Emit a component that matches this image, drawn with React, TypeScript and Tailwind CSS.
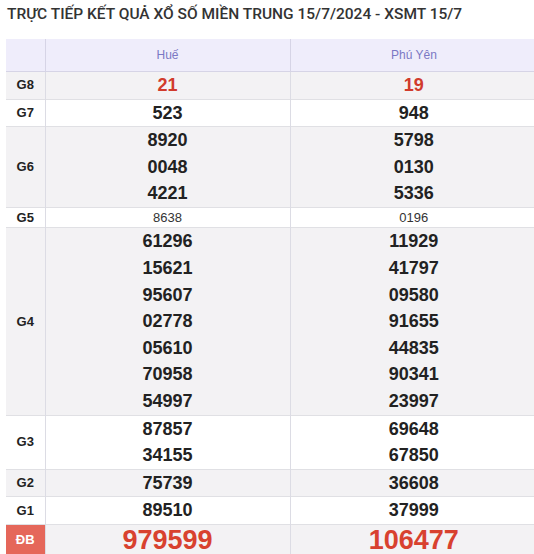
const rows: { label: string; hue: string[]; py: string[]; kind?: 'g8' | 'g5' | 'db'; gray: boolean }[] = [
  { label: 'G8', hue: ['21'], py: ['19'], kind: 'g8', gray: true },
  { label: 'G7', hue: ['523'], py: ['948'], gray: false },
  { label: 'G6', hue: ['8920', '0048', '4221'], py: ['5798', '0130', '5336'], gray: true },
  { label: 'G5', hue: ['8638'], py: ['0196'], kind: 'g5', gray: false },
  {
    label: 'G4',
    hue: ['61296', '15621', '95607', '02778', '05610', '70958', '54997'],
    py: ['11929', '41797', '09580', '91655', '44835', '90341', '23997'],
    gray: true,
  },
  { label: 'G3', hue: ['87857', '34155'], py: ['69648', '67850'], gray: false },
  { label: 'G2', hue: ['75739'], py: ['36608'], gray: true },
  { label: 'G1', hue: ['89510'], py: ['37999'], gray: false },
  { label: 'ĐB', hue: ['979599'], py: ['106477'], kind: 'db', gray: true },
];

const numClass = (kind?: string) => {
  if (kind === 'g8') return 'text-[18px] font-bold text-[#d13b2c] leading-[27px]';
  if (kind === 'g5') return 'text-[13px] font-normal text-[#333] leading-[17px]';
  if (kind === 'db') return 'text-[27px] font-bold text-[#d8412f] leading-[30px]';
  return 'text-[18px] font-bold text-[#222] leading-[26.6px]';
};

const Cell = ({ nums, kind }: { nums: string[]; kind?: string }) => (
  <td className="border-r border-[#dcdce4] text-center align-middle p-0">
    {nums.map((n) => (
      <div key={n} className={numClass(kind)}>
        {n}
      </div>
    ))}
  </td>
);

export default function App() {
  return (
    <div className="w-[534px] h-[554px] overflow-hidden bg-white" style={{ fontFamily: '"Liberation Sans", Arial, sans-serif' }}>
      <h1
        className="pl-[7px] pt-[4px] h-[39px] text-[15.5px] leading-[20px] font-medium text-[#333]"
        style={{ fontFamily: 'Roboto, "Liberation Sans", sans-serif' }}
      >
        TRỰC TIẾP KẾT QUẢ XỔ SỐ MIỀN TRUNG 15/7/2024 - XSMT 15/7
      </h1>
      <table className="ml-[6px] w-[532px] border-collapse table-fixed">
        <colgroup>
          <col className="w-[39px]" />
          <col className="w-[245px]" />
          <col />
        </colgroup>
        <thead>
          <tr className="bg-[#efedfb] h-[32px] border-b border-[#d6d4e6]">
            <th className="border-r border-[#d6d4e6]"></th>
            <th className="border-r border-[#d6d4e6] text-[12px] font-normal text-[#7b78c4]">Huế</th>
            <th className="text-[12px] font-normal text-[#7b78c4]">Phú Yên</th>
          </tr>
        </thead>
        <tbody>
          {rows.map((r) => (
            <tr key={r.label} className={`${r.gray ? 'bg-[#f3f2f4]' : 'bg-white'} border-b border-[#e0e0e4]`}>
              <td
                className={`border-r border-[#dcdce4] text-center align-middle text-[13px] font-bold p-0 ${
                  r.kind === 'db' ? 'bg-[#e5675a] text-white' : 'text-[#222]'
                }`}
              >
                {r.label}
              </td>
              <Cell nums={r.hue} kind={r.kind} />
              <Cell nums={r.py} kind={r.kind} />
            </tr>
          ))}
        </tbody>
      </table>
    </div>
  );
}
